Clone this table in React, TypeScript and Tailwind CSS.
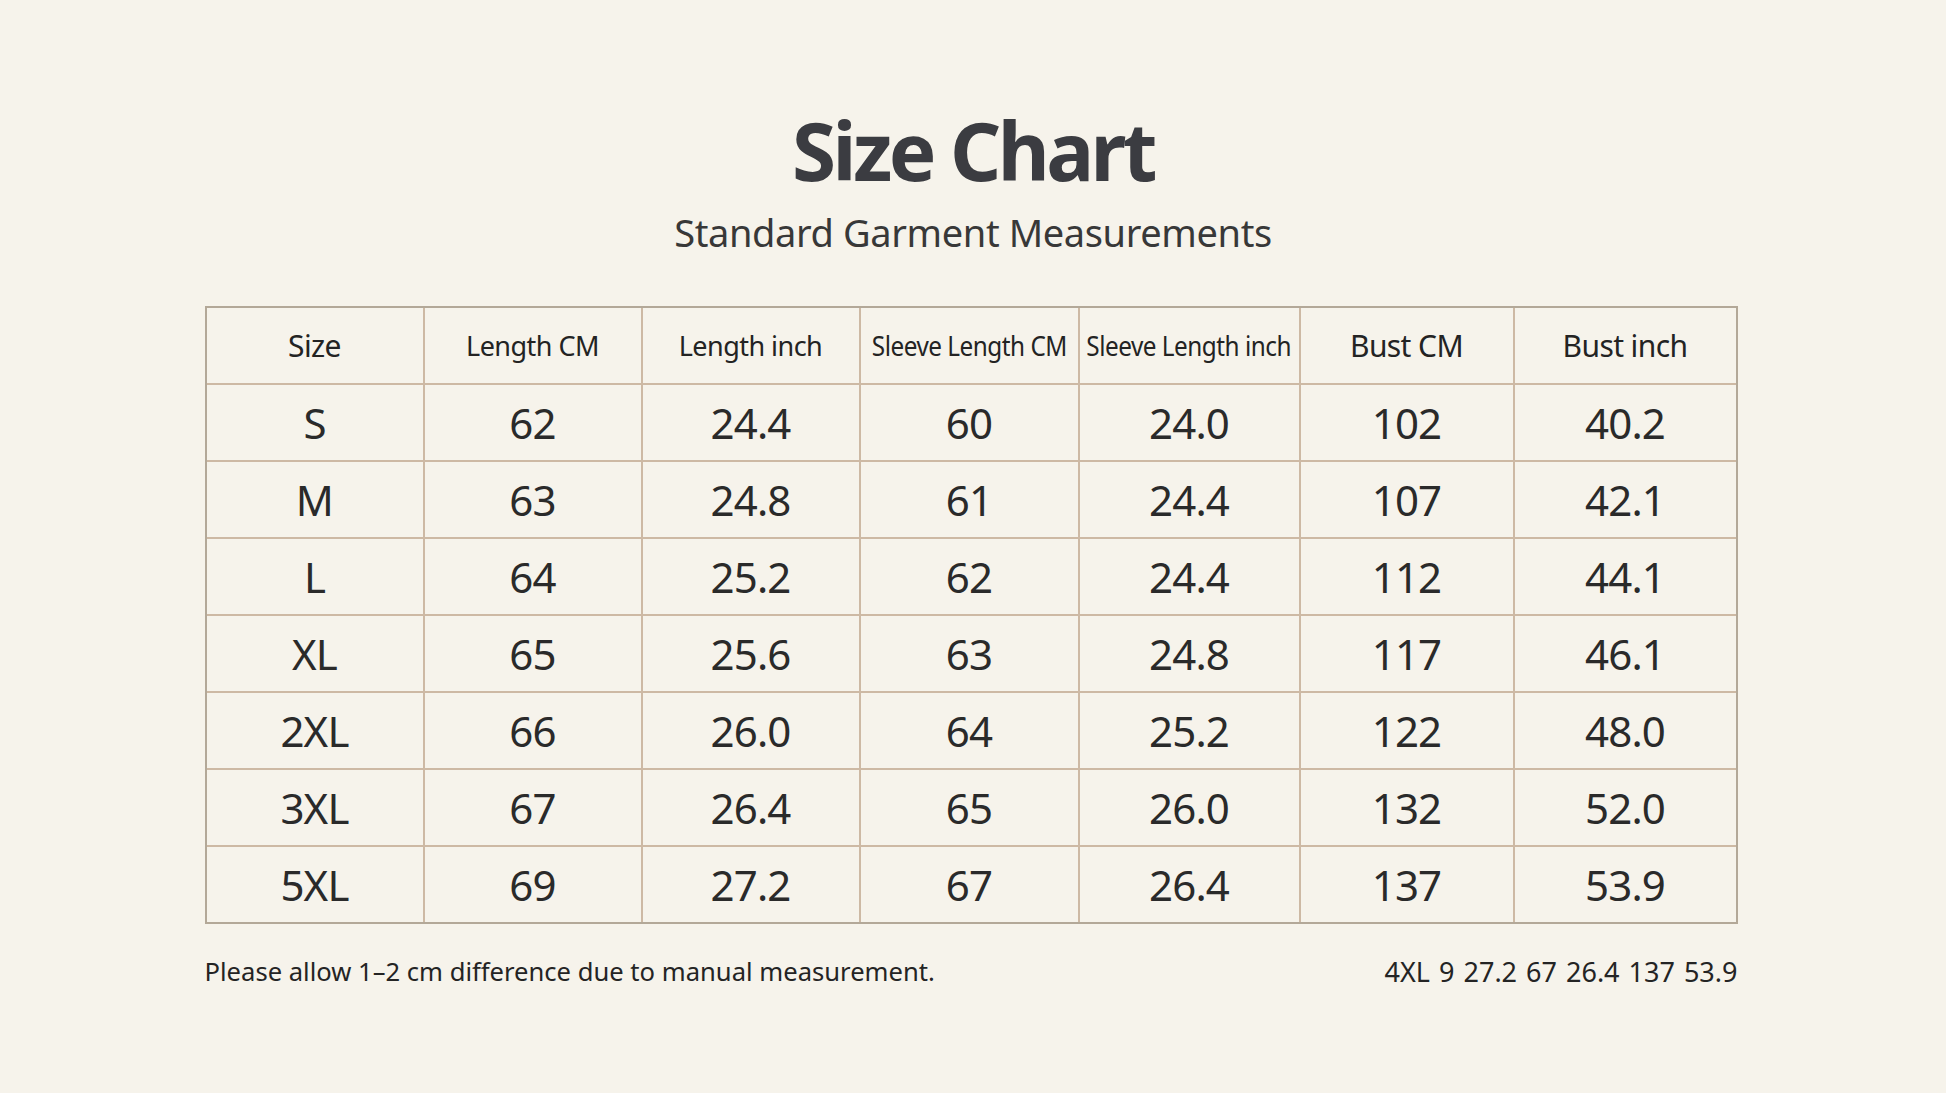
const headers = ['Size', 'Length CM', 'Length inch', 'Sleeve Length CM', 'Sleeve Length inch', 'Bust CM', 'Bust inch'];

const rows = [
  ['S', '62', '24.4', '60', '24.0', '102', '40.2'],
  ['M', '63', '24.8', '61', '24.4', '107', '42.1'],
  ['L', '64', '25.2', '62', '24.4', '112', '44.1'],
  ['XL', '65', '25.6', '63', '24.8', '117', '46.1'],
  ['2XL', '66', '26.0', '64', '25.2', '122', '48.0'],
  ['3XL', '67', '26.4', '65', '26.0', '132', '52.0'],
  ['5XL', '69', '27.2', '67', '26.4', '137', '53.9'],
];

// header sizes differ a bit per column in the source; sleeve labels are squeezed to fit
const headerClass = (h: string) => {
  if (h.startsWith('Sleeve')) return 'inline-block whitespace-nowrap text-[27px] tracking-[-0.02em] scale-x-[0.9]';
  if (h.startsWith('Length')) return 'text-[27px] tracking-[-0.02em]';
  return 'text-[30px] tracking-[-0.02em]';
};

const SizeChart = () => {
  return (
    <div className="h-[1093px] w-full overflow-hidden bg-[#f6f3eb] font-['Noto_Sans',sans-serif] text-[#262626]">
      <div className="flex flex-col items-center pt-[110px]">
        <h1 className="text-[80px] font-bold leading-none tracking-[-0.045em] text-[#3b3c41]">Size Chart</h1>
        <p className="mt-[23px] text-[38px] leading-none tracking-[-0.01em] text-[#383838]">Standard Garment Measurements</p>

        <div className="mt-[55px] -translate-x-[2px] grid w-[1533px] grid-cols-[216px_216px_216px_217px_219px_212px_221px] gap-[2px] border-2 border-[#b3a898] bg-[#cdb9a4]">
          {headers.map((h) => (
            <div key={h} className="flex h-[75px] items-center justify-center bg-[#f6f3eb] leading-none text-[#232323]">
              <span className={headerClass(h)}>{h}</span>
            </div>
          ))}
          {rows.map((r) =>
            r.map((v, i) => (
              <div
                key={r[0] + i}
                className="flex h-[75px] items-center justify-center bg-[#f6f3eb] text-[42px] leading-none tracking-[-0.02em] text-[#2a2a2a]"
              >
                {v}
              </div>
            ))
          )}
        </div>

        <div className="mt-[34px] -translate-x-[2px] flex w-[1533px] items-center justify-between leading-none text-[#242424]">
          <span className="text-[25.6px]">Please allow 1–2 cm difference due to manual measurement.</span>
          <span className="text-[27px] [word-spacing:2px]">4XL 9 27.2 67 26.4 137 53.9</span>
        </div>
      </div>
    </div>
  );
};

export default SizeChart;
